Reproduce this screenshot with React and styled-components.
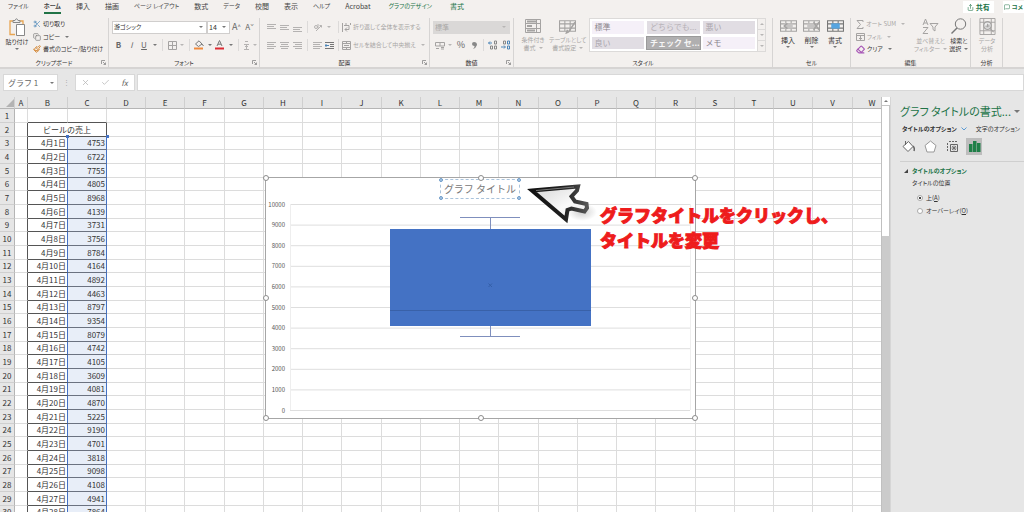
import { useState } from "react"
import styled, { createGlobalStyle } from "styled-components"
import { Check, Copy, Eraser, MessageSquare, Paintbrush, Scissors, Share, X } from "lucide-react"

const TABS = [
    { name: "ファイル" },
    { name: "ホーム", active: true },
    { name: "挿入", kanji: true },
    { name: "描画", kanji: true },
    { name: "ページ レイアウト" },
    { name: "数式", kanji: true },
    { name: "データ" },
    { name: "校閲", kanji: true },
    { name: "表示", kanji: true },
    { name: "ヘルプ" },
    { name: "Acrobat", kanji: true },
    { name: "グラフのデザイン", green: true },
    { name: "書式", kanji: true, green: true },
]

const SALES = [
    4753, 6722, 7755, 4805, 8968, 4139, 3731, 3756, 8784, 4164, 4892, 4463, 8797, 9354,
    8079, 4742, 4105, 3609, 4081, 4870, 5225, 9190, 4701, 3818, 9098, 4108, 4941, 7864,
]

const LETTERS = "ABCDEFGHIJKLMNOPQRSTUVW".split("")
const EMPTY = LETTERS.slice(3)

const STYLES = [
    { name: "標準", bg: "#f5f0f8", color: "#8a858c" },
    { name: "どちらでも...", bg: "#e1dde3", color: "#b5b0b6" },
    { name: "悪い", bg: "#e1dde3", color: "#aaa5ac" },
    { name: "良い", bg: "#e1dde3", color: "#aaa5ac" },
    { name: "チェック セ...", bg: "#b0afb0", color: "#f6f6f6", bold: true },
    { name: "メモ", bg: "#f5f0f8", color: "#8a858c" },
]

const TICKS = [0, 1000, 2000, 3000, 4000, 5000, 6000, 7000, 8000, 9000, 10000]

const yOf = (value) => 233.5 - (value * 206) / 10000

const Lines = ({ align = "left", rows = [0, 3, 6], color = "#b4b2b1" }) => {
    const x = { left: [0, 0], center: [1, 1], right: [2, 0] }[align]
    return (
        <svg width="9" height="9" viewBox="0 0 9 9" stroke={color} aria-hidden="true">
            {rows.map((y, i) => (
                <path key={y} d={i % 2 ? `M${x[0]} ${y + 1.5}H${9 - (align === "left" ? 2 : x[1])}` : `M0 ${y + 1.5}H9`} />
            ))}
        </svg>
    )
}

const GridIcon = ({ width = 16, height = 15, color = "#a5a3a2", fill, mark }) => (
    <svg width={width} height={height} viewBox="0 0 16 15" fill="none" stroke={color} aria-hidden="true">
        <path d="M.5 2.5H15.5V12.5H.5ZM.5 5.5H15.5M.5 9.5H15.5M5.5 2.5V12.5M10.5 2.5V12.5" />
        {fill && <rect x="4" y="5" width="8" height="5" fill={fill} stroke="none" />}
        {mark && <path d={mark} strokeWidth="1.4" />}
    </svg>
)

const Launcher = () => (
    <LauncherButton aria-label="詳細設定">
        <svg width="5" height="5" viewBox="0 0 5 5" fill="none" stroke="#888">
            <path d="M.5 4V.5H4M2 2L4.5 4.5M4.5 2.5V4.5H2.5" strokeWidth=".8" />
        </svg>
    </LauncherButton>
)

const Group = ({ width, label, launcher, children }) => (
    <GroupBox $width={width}>
        <GroupBody>{children}</GroupBody>
        <GroupLabel>{label}</GroupLabel>
        {launcher && <Launcher />}
    </GroupBox>
)

const ClipboardGroup = () => (
    <Group width={109} label="クリップボード" launcher>
        <BigButton $width={28}>
            <svg width="17" height="18" viewBox="0 0 17 18" fill="none" aria-hidden="true">
                <path d="M6 16.5H1V3H4M11 3H14V6" stroke="#e8a552" strokeWidth="1.3" />
                <path d="M4 4.5V2.5H6Q7.5 -1 9 2.5H11V4.5Z" fill="#eee" stroke="#888" />
                <path d="M7.5 6.5H15.5V17.5H7.5Z" fill="#fff" stroke="#888" />
            </svg>
            <span>貼り付け</span>
            <Caret />
        </BigButton>
        <Stack>
            <TextButton><Scissors size={8} color="#4c86b8" strokeWidth={2} />切り取り</TextButton>
            <TextButton><Copy size={8} color="#777" strokeWidth={2} />コピー<Caret $inline /></TextButton>
            <TextButton><Paintbrush size={8} color="#d58a3a" strokeWidth={3} />書式のコピー/貼り付け</TextButton>
        </Stack>
    </Group>
)

const FontGroup = () => (
    <Group width={151} label="フォント" launcher>
        <Rows>
            <Row>
                <SelectWrap $width={95}>
                    <Select aria-label="フォント名"><option>游ゴシック</option></Select>
                    <Caret />
                </SelectWrap>
                <SelectWrap $width={23}>
                    <Select aria-label="フォント サイズ" $large><option>14</option></Select>
                    <Caret />
                </SelectWrap>
                <Tool $width={13} $size={9}>A<sup>^</sup></Tool>
                <Tool $width={13} $size={8}>A<sup>ˇ</sup></Tool>
            </Row>
            <Row>
                <Tool $width={13} $bold>B</Tool>
                <Tool $width={13} $italic>I</Tool>
                <Tool $width={12} $underline>U</Tool>
                <Tool $width={9}><Caret /></Tool>
                <Divider />
                <Tool $width={12}>
                    <svg width="9" height="9" viewBox="0 0 9 9" fill="none" stroke="#a5a3a2" aria-hidden="true">
                        <path d="M.5 .5H8.5V8.5H.5ZM.5 4.5H8.5M4.5 .5V8.5" />
                    </svg>
                </Tool>
                <Tool $width={8}><Caret $dim /></Tool>
                <Divider />
                <Tool $width={12}>
                    <svg width="10" height="10" viewBox="0 0 10 10" fill="none" aria-hidden="true">
                        <path d="M1.5 4L5 .8L8 4L4.5 6.5ZM8 4L9.5 6" stroke="#777" />
                        <path d="M0 8.5H9" stroke="#f08a3c" strokeWidth="2" />
                    </svg>
                </Tool>
                <Tool $width={9}><Caret /></Tool>
                <Tool $width={12}>
                    <svg width="10" height="10" viewBox="0 0 10 10" fill="none" aria-hidden="true">
                        <path d="M2 6L4.5 .5L7 6M3 4.2H6" stroke="#777" />
                        <path d="M0 8.5H9" stroke="#dc2b33" strokeWidth="2" />
                    </svg>
                </Tool>
                <Tool $width={9}><Caret /></Tool>
                <Divider />
                <Tool $width={9}>
                    <svg width="7" height="9" viewBox="0 0 7 9" fill="none" stroke="#b4b2b1" aria-hidden="true">
                        <path d="M2 .5H5M1 3.5H6M2 5.500H5M1 8.500H6M3.500 4V8" />
                    </svg>
                </Tool>
                <Tool $width={8}><Caret $dim /></Tool>
            </Row>
        </Rows>
    </Group>
)

const AlignGroup = () => (
    <Group width={170} label="配置" launcher>
        <Rows $indent>
            <Row>
                <Tool $width={13}><Lines rows={[0, 2, 4]} /></Tool>
                <Tool $width={13}><Lines rows={[1, 3, 5]} /></Tool>
                <Tool $width={13}><Lines rows={[3, 5, 7]} /></Tool>
                <Divider />
                <Tool $width={12}>
                    <svg width="9" height="9" viewBox="0 0 9 9" fill="none" stroke="#b4b2b1" aria-hidden="true">
                        <circle cx="3" cy="4" r="1.5" />
                        <path d="M5 1V5.5M3 8L8.5 2.5M6.5 2.5H8.5V4.5" />
                    </svg>
                </Tool>
                <Tool $width={12}><Caret $dim /></Tool>
                <Divider />
                <TextButton $dim>
                    <svg width="9" height="9" viewBox="0 0 9 9" fill="none" stroke="#a5a3a2" aria-hidden="true">
                        <path d="M.5 0V9M8.5 0V2M2 2.5H7V6.5H3M5 4.5L3 6.5L5 8.5M4 0V2" />
                    </svg>
                    折り返して全体を表示する
                </TextButton>
            </Row>
            <Row>
                <Tool $width={13}><Lines rows={[0, 2, 4, 6]} /></Tool>
                <Tool $width={13}><Lines align="center" rows={[0, 2, 4, 6]} /></Tool>
                <Tool $width={13}><Lines align="right" rows={[0, 2, 4, 6]} /></Tool>
                <Divider />
                <Tool $width={12}><Lines rows={[0, 2, 4, 6]} /></Tool>
                <Tool $width={12}>
                    <svg width="9" height="9" viewBox="0 0 9 9" fill="none" stroke="#777" aria-hidden="true">
                        <path d="M0 1.5H9M5 3.5H9M5 5.5H9M0 7.5H9" />
                        <path d="M4 4.5H0M1.5 3L0 4.5L1.5 6" stroke="#4c86b8" />
                    </svg>
                </Tool>
                <Divider />
                <TextButton $dim>
                    <svg width="9" height="9" viewBox="0 0 9 9" fill="none" stroke="#a5a3a2" aria-hidden="true">
                        <path d="M.5 .5H8.5V8.5H.5ZM.5 2.5H8.5M.5 6.5H8.5M4.5 .5V2.5M4.5 6.5V8.5M2 4.5H7" />
                    </svg>
                    セルを結合して中央揃え
                    <Caret $dim $inline />
                </TextButton>
            </Row>
        </Rows>
    </Group>
)

const DecimalIcon = ({ right }) => (
    <svg width="10" height="10" viewBox="0 0 10 10" fill="none" aria-hidden="true">
        <path d={right ? "M0 7H4M3 5.5L4.5 7L3 8.5" : "M4 3H.5M2 1.5L.5 3L2 4.5"} stroke="#4c86b8" />
        <path d="M6.500 1H8.500V4H6.500ZM6.500 6H8.500V9H6.500Z" stroke={right ? "#4c86b8" : "#888"} />
        <path d={right ? "M2.5 1H4.5V4H2.5Z" : "M2.5 6H4.5V9H2.5Z"} stroke="#888" />
    </svg>
)

const NumberGroup = () => (
    <Group width={84} label="数値" launcher>
        <Rows>
            <Row>
                <SelectWrap $width={77} $disabled>
                    <Select aria-label="表示形式" disabled $large><option>標準</option></Select>
                    <Caret $dim />
                </SelectWrap>
            </Row>
            <Row>
                <Tool $width={13}>
                    <svg width="10" height="9" viewBox="0 0 10 9" fill="none" stroke="#a5a3a2" aria-hidden="true">
                        <path d="M.5 1.5H9.5V5H.5ZM5 2V5M1 7.5H4M6 6.5H9M6 8H9" />
                    </svg>
                </Tool>
                <Tool $width={8}><Caret $dim /></Tool>
                <Tool $width={14} $size={9}>%</Tool>
                <Tool $width={12}>
                    <svg width="5" height="7" viewBox="0 0 5 7" aria-hidden="true">
                        <path d="M2 0Q5 0 5 3Q4 6 1 7Q3 5 2.500 4Q0 4 0 2Q0 0 2 0Z" fill="#888" />
                    </svg>
                </Tool>
                <Divider />
                <Tool $width={12}><DecimalIcon /></Tool>
                <Tool $width={13}><DecimalIcon right /></Tool>
            </Row>
        </Rows>
    </Group>
)

const StyleGroup = () => (
    <Group width={259} label="スタイル">
        <BigButton $width={32} $dim>
            <svg width="16" height="16" viewBox="0 0 16 16" fill="none" stroke="#a5a3a2" aria-hidden="true">
                <path d="M.5 1.5H15.5V14.5H.5ZM.5 5.5H15.5M.5 10.5H15.5M11.5 1.5V14.5" />
                <path d="M2 3.5H11M2 8H7M2 12.5H10" strokeWidth="2" />
            </svg>
            <span>条件付き<br />書式<Caret $dim $inline /></span>
        </BigButton>
        <BigButton $width={34} $dim>
            <GridIcon width={17} height={16} mark="M15 4L9 13L7 14L8 11" />
            <span>テーブルとして<br />書式設定<Caret $dim $inline /></span>
        </BigButton>
        <Gallery>
            <GalleryGrid>
                {STYLES.map((item) => (
                    <StyleTile key={item.name} $bg={item.bg} $color={item.color} $bold={item.bold}>{item.name}</StyleTile>
                ))}
            </GalleryGrid>
            <GalleryScroll>
                <ScrollButton aria-label="上へ"><Caret $dim $up /></ScrollButton>
                <ScrollButton aria-label="下へ"><Caret $dim /></ScrollButton>
                <ScrollButton aria-label="その他"><Caret $dim /></ScrollButton>
            </GalleryScroll>
        </Gallery>
    </Group>
)

const CellGroup = () => (
    <Group width={78} label="セル">
        <BigButton $width={24} $kanji>
            <GridIcon width={17} height={16} fill="#c6c4c3" mark="M7 5L4 7.5L7 10" />
            <span>挿入</span><Caret />
        </BigButton>
        <BigButton $width={23} $kanji>
            <GridIcon width={17} height={16} fill="#c6c4c3" mark="M10 4L15 11M15 4L10 11" />
            <span>削除</span><Caret />
        </BigButton>
        <BigButton $width={24} $kanji>
            <GridIcon width={17} height={16} color="#777" fill="#57a5e0" />
            <span>書式</span><Caret />
        </BigButton>
    </Group>
)

const EditGroup = () => (
    <Group width={120} label="編集">
        <Stack $width={60}>
            <TextButton $dim>
                <svg width="8" height="9" viewBox="0 0 8 9" fill="none" stroke="#a5a3a2" aria-hidden="true">
                    <path d="M7 2V.5H1L4.5 4.5L1 8.5H7V7" />
                </svg>
                オート SUM<Caret $dim $inline />
            </TextButton>
            <TextButton $dim>
                <svg width="9" height="9" viewBox="0 0 9 9" fill="none" stroke="#a5a3a2" aria-hidden="true">
                    <path d="M.5 1.5H8.5V8.5H.5ZM.5 3.5H8.5M4.5 4V7.5M3 6L4.5 7.5L6 6" />
                </svg>
                フィル<Caret $dim $inline />
            </TextButton>
            <TextButton><Eraser size={9} color="#a655b5" strokeWidth={3} />クリア<Caret $inline /></TextButton>
        </Stack>
        <BigButton $width={30} $dim>
            <svg width="17" height="17" viewBox="0 0 17 17" fill="none" stroke="#a5a3a2" aria-hidden="true">
                <path d="M1 7L3.5 1L6 7M2 5H5M1 9.5H6L1 15.5H6M8 5.5H16L13 9V13L11 11.5V9Z" />
            </svg>
            <span>並べ替えと<br />フィルター<Caret $dim $inline /></span>
        </BigButton>
        <BigButton $width={23}>
            <svg width="17" height="17" viewBox="0 0 17 17" fill="none" stroke="#777" aria-hidden="true">
                <circle cx="10.5" cy="6" r="5.200" />
                <path d="M7 10L1.500 15.500" strokeWidth="1.500" />
            </svg>
            <span>検索と<br />選択<Caret $inline /></span>
        </BigButton>
    </Group>
)

const AnalysisGroup = () => (
    <Group width={32} label="分析">
        <BigButton $width={26} $dim>
            <svg width="17" height="17" viewBox="0 0 17 18" fill="none" stroke="#a5a3a2" aria-hidden="true">
                <path d="M.5 .5H16.5V17.5H.5ZM.5 4.5H16.5M.5 13.5H16.5M4.5 .5V17.5M12.5 .5V17.5" />
                <circle cx="8.5" cy="8" r="4" fill="#eee" strokeWidth="1.4" />
                <path d="M11 11L15 15M7 10V8M8.5 10V6M10 10V7" strokeWidth="1.2" />
            </svg>
            <span>データ<br />分析</span>
        </BigButton>
    </Group>
)

const Sheet = () => (
    <Table>
        <colgroup>
            <Col $width={15} />
            <Col $width={13} />
            {LETTERS.slice(1).map((letter, i) => <Col key={letter} $width={i % 4 === 0 ? 40 : 39} />)}
        </colgroup>
        <thead>
            <tr>
                <HeadCell><Corner viewBox="0 0 8 8" aria-hidden="true"><path d="M8 0V8H0Z" fill="#b3b3b3" /></Corner></HeadCell>
                {LETTERS.map((letter) => <HeadCell key={letter} scope="col">{letter}</HeadCell>)}
            </tr>
        </thead>
        <tbody>
            <SheetRow>
                <RowHead scope="row">1</RowHead>
                <Cell />
                <Cell $bottom="#555" />
                <Cell $bottom="#555" />
                {EMPTY.map((letter) => <Cell key={letter} />)}
            </SheetRow>
            <SheetRow>
                <RowHead scope="row">2</RowHead>
                <Cell $right="#555" />
                <Cell colSpan={2} $right="#555" $bottom="#555" $align="center">ビールの売上</Cell>
                {EMPTY.map((letter) => <Cell key={letter} />)}
            </SheetRow>
            {SALES.map((value, i) => (
                <SheetRow key={i}>
                    <RowHead scope="row">{i + 3}</RowHead>
                    <Cell $right="#555" />
                    <Cell $right="#4472c4" $bottom="#555">4月{i + 1}日</Cell>
                    <Cell $right="#4472c4" $bottom="#6b7280" $bg="#e8eef8">{value}</Cell>
                    {EMPTY.map((letter) => <Cell key={letter} />)}
                </SheetRow>
            ))}
        </tbody>
    </Table>
)

const BoxPlot = () => (
    <ChartFrame>
        <Plot viewBox="0 0 431 242" role="img" aria-label="箱ひげ図">
            {TICKS.map((tick) => (
                <g key={tick}>
                    <path d={`M25 ${yOf(tick)}H425`} stroke="#dedede" />
                    <AxisText x="20" y={yOf(tick) + 2} textAnchor="end">{tick}</AxisText>
                </g>
            ))}
            <path d="M25.5 27V233M425.5 27V233" stroke="#eeeeee" />
            <path d="M225.5 40V52M195 40.5H255M225.5 148V159M195 159.5H255" stroke="#7f8fbd" fill="none" />
            <rect x="125" y="52" width="201" height="97" fill="#4472c4" />
            <path d="M125 133.5H326" stroke="#3961a8" />
            <path d="M223.5 106.5L227 110M227 106.5L223.5 110" stroke="#345fa8" />
        </Plot>
        <ChartTitle>
            グラフ タイトル
            <Handle $x="0%" $y="0%" $small />
            <Handle $x="100%" $y="0%" $small />
            <Handle $x="0%" $y="100%" $small />
            <Handle $x="100%" $y="100%" $small />
        </ChartTitle>
        <Handle $x="0%" $y="0%" />
        <Handle $x="50%" $y="0%" />
        <Handle $x="100%" $y="0%" />
        <Handle $x="0%" $y="50%" />
        <Handle $x="100%" $y="50%" />
        <Handle $x="0%" $y="100%" />
        <Handle $x="50%" $y="100%" />
        <Handle $x="100%" $y="100%" />
    </ChartFrame>
)

const Pointer = () => (
    <PointerSvg width="74" height="48" viewBox="0 0 74 48" aria-hidden="true">
        <defs>
            <linearGradient id="pointerFill" x1="0" y1="0" x2="1" y2="1">
                <stop offset="0" stopColor="#d4d4d4" />
                <stop offset="0.6" stopColor="#fafafa" />
                <stop offset="1" stopColor="#e4e4e4" />
            </linearGradient>
            <linearGradient id="pointerEdge" x1="0" y1="0" x2="1" y2="0">
                <stop offset="0" stopColor="#111" />
                <stop offset="0.6" stopColor="#222" />
                <stop offset="1" stopColor="#555" />
            </linearGradient>
            <radialGradient id="pointerShade">
                <stop offset="0" stopColor="#bbb" stopOpacity="0.7" />
                <stop offset="1" stopColor="#bbb" stopOpacity="0" />
            </radialGradient>
        </defs>
        <ellipse cx="58" cy="34" rx="15" ry="9" fill="url(#pointerShade)" />
        <path
            d="M8 12.5L54 8.5L53 12.500L47.500 18.500L51 23.500L62.500 26L63 30L60.500 33.500L47.500 30.500L43.500 32L42 41.500Z"
            fill="url(#pointerFill)" stroke="url(#pointerEdge)" strokeWidth="4" strokeLinejoin="miter"
        />
        <path d="M12 12.500L50 9" stroke="#777" strokeWidth="1" />
    </PointerSvg>
)

const FormatPane = () => {
    const [place, setPlace] = useState("above")

    return (
        <Pane>
            <PaneHeader>
                <PaneTitle>グラフ タイトルの書式...</PaneTitle>
                <Caret $large />
            </PaneHeader>
            <PaneTabs>
                <PaneTab $bold>
                    タイトルのオプション
                    <svg width="6" height="4" viewBox="0 0 6 4" fill="none" stroke="#5b9bd5"><path d="M.5 .5L3 3L5.5 .5" /></svg>
                </PaneTab>
                <PaneTab>文字のオプション</PaneTab>
            </PaneTabs>
            <PaneIcons>
                <PaneIcon aria-label="塗りつぶしと線">
                    <svg width="13" height="13" viewBox="0 0 13 13" fill="#fff" stroke="#666">
                        <path d="M1 6.5L6.5 1.5L11 6.5L6 11.5ZM3.5 1V5" />
                        <path d="M11 6Q13 8 12 11" fill="none" strokeWidth="1.5" />
                    </svg>
                </PaneIcon>
                <PaneIcon aria-label="効果">
                    <svg width="13" height="13" viewBox="0 0 13 13" fill="#fff" stroke="#999">
                        <path d="M6.5 1L12 5.500L10 12H3L1 5.500Z" />
                    </svg>
                </PaneIcon>
                <PaneIcon aria-label="サイズとプロパティ">
                    <svg width="13" height="13" viewBox="0 0 13 13" fill="none" stroke="#666">
                        <path d="M3 1.5H12M1.5 3V12" strokeDasharray="2 1" />
                        <path d="M4.500 4.500H11.500V11.500H4.500Z" />
                        <path d="M8 5.500V10.500M5.500 8H10.500M6 6L10 10M10 6L6 10" strokeWidth=".8" />
                    </svg>
                </PaneIcon>
                <PaneIcon aria-label="タイトルのオプション" $active>
                    <svg width="13" height="13" viewBox="0 0 13 13" fill="#1f7f48">
                        <path d="M1 4H4.5V12H1ZM5 1H8.5V12H5ZM9 3H12.5V12H9Z" />
                    </svg>
                </PaneIcon>
            </PaneIcons>
            <Section>
                <SectionTitle>
                    <svg width="4" height="4" viewBox="0 0 4 4"><path d="M4 0V4H0Z" fill="#444" /></svg>
                    タイトルのオプション
                </SectionTitle>
                <PlaceSet>
                    <legend>タイトルの位置</legend>
                    <RadioLabel>
                        <Radio type="radio" name="place" checked={place === "above"} onChange={() => setPlace("above")} />
                        <span>上(<u>A</u>)</span>
                    </RadioLabel>
                    <RadioLabel>
                        <Radio type="radio" name="place" checked={place === "overlay"} onChange={() => setPlace("overlay")} />
                        <span>オーバーレイ(<u>O</u>)</span>
                    </RadioLabel>
                </PlaceSet>
            </Section>
        </Pane>
    )
}

const App = () => (
    <Page>
        <GlobalStyle />
        <TabBar>
            <TabList>
                {TABS.map((tab) => (
                    <Tab key={tab.name} $active={tab.active} $green={tab.green} $kanji={tab.kanji}>{tab.name}</Tab>
                ))}
            </TabList>
            <ShareButton $large><Share size={7} />共有</ShareButton>
            <ShareButton><MessageSquare size={6} />コメ</ShareButton>
        </TabBar>
        <Ribbon>
            <ClipboardGroup />
            <FontGroup />
            <AlignGroup />
            <NumberGroup />
            <StyleGroup />
            <CellGroup />
            <EditGroup />
            <AnalysisGroup />
        </Ribbon>
        <FormulaBar>
            <NameBox>
                <NameInput aria-label="名前ボックス" defaultValue="グラフ 1" />
                <Caret />
            </NameBox>
            <Grip>⋮</Grip>
            <FormulaTools>
                <Tool $width={19} aria-label="キャンセル"><X size={9} color="#b5b5b5" /></Tool>
                <Tool $width={20} aria-label="入力"><Check size={9} color="#b5b5b5" /></Tool>
                <Tool $width={19} $italic>fx</Tool>
            </FormulaTools>
            <FormulaInput aria-label="数式バー" />
        </FormulaBar>
        <Workspace>
            <Canvas>
                <Sheet />
                <RangeMark $left={66} />
                <RangeMark $left={106} />
                <BoxPlot />
                <Pointer />
                <Note>グラフタイトルをクリックし、<br />タイトルを変更</Note>
            </Canvas>
            <ScrollBar>
                <ScrollArrow aria-label="上にスクロール"><Caret $up /></ScrollArrow>
                <Thumb />
            </ScrollBar>
            <FormatPane />
        </Workspace>
    </Page>
)

export default App

const GlobalStyle = createGlobalStyle`
    * {
        box-sizing: border-box;
    }
    body {
        margin: 0;
        overflow: hidden;
    }
    body, button, input, select {
        font-family: "Noto Sans CJK JP", "Noto Sans", sans-serif;
        font-size: 6px;
        line-height: 8px;
        color: #333;
    }
    button, input, select {
        margin: 0;
        padding: 0;
        border: none;
        background: none;
    }
    svg {
        flex: none;
    }
`

const Page = styled.div`
    height: 100vh;
    display: flex;
    flex-direction: column;
    background: #e6e6e6;
    overflow: hidden;
`

const Caret = styled.span`
    flex: none;
    display: inline-block;
    width: 0;
    height: 0;
    border: ${({ $large }) => ($large ? 3 : 2)}px solid transparent;
    border-bottom-width: 0;
    border-top-color: ${({ $dim }) => ($dim ? "#b8b6b5" : "#777")};
    transform: ${({ $up }) => ($up ? "rotate(180deg)" : "none")};
    margin-left: ${({ $inline }) => ($inline ? 3 : 0)}px;
    vertical-align: middle;
`

// tabs
const TabBar = styled.nav`
    flex: none;
    height: 14px;
    display: flex;
    gap: 9px;
    background: #f3f0ee;
`

const TabList = styled.div`
    flex: 1;
    display: flex;
    gap: 15px;
    padding-left: 8px;
`

const Tab = styled.button`
    height: 14px;
    white-space: nowrap;
    font-feature-settings: "palt";
    font-size: ${({ $kanji }) => ($kanji ? 7 : 6)}px;
    font-weight: ${({ $active }) => ($active ? 700 : 400)};
    color: ${({ $green }) => ($green ? "#217346" : "#444")};
    border-bottom: 2px solid ${({ $active }) => ($active ? "#217346" : "transparent")};
    margin-left: ${({ $green }) => ($green ? 3 : 0)}px;
`

const ShareButton = styled.button`
    display: flex;
    align-items: center;
    gap: 2px;
    height: 12px;
    margin-top: 1px;
    padding: 0 ${({ $large }) => ($large ? 4 : 1)}px;
    background: #fff;
    color: #217346;
    font-size: ${({ $large }) => ($large ? 7 : 6)}px;
    font-weight: 700;
    font-feature-settings: "palt";
    white-space: nowrap;
`

// ribbon
const Ribbon = styled.div`
    flex: none;
    height: 55px;
    display: flex;
    padding-top: 4px;
    background: #f3f0ee;
    border-bottom: 2px solid #d6d4d3;
`

const GroupBox = styled.section`
    position: relative;
    flex: 0 0 ${({ $width }) => $width}px;
    min-width: 0;
    display: flex;
    flex-direction: column;
    padding: 0 3px;
    border-right: 1px solid #d6d4d3;
    font-feature-settings: "palt";
`

const GroupBody = styled.div`
    flex: 1;
    display: flex;
`

const GroupLabel = styled.div`
    height: 9px;
    line-height: 9px;
    text-align: center;
    white-space: nowrap;
`

const LauncherButton = styled.button`
    position: absolute;
    right: 2px;
    bottom: 2px;
    display: flex;
`

const Stack = styled.div`
    flex: 0 0 ${({ $width }) => ($width ? `${$width}px` : "auto")};
    display: flex;
    flex-direction: column;
    justify-content: space-between;
    padding: 0 0 3px 2px;
`

const Rows = styled.div`
    flex: 1;
    display: flex;
    flex-direction: column;
    gap: 4px;
    padding: 2px 0 0 ${({ $indent }) => ($indent ? 2 : 0)}px;
`

const Row = styled.div`
    display: flex;
    align-items: center;
    height: 14px;
`

const TextButton = styled.button`
    display: flex;
    align-items: center;
    gap: 2px;
    height: 12px;
    white-space: nowrap;
    font-feature-settings: "palt";
    color: ${({ $dim }) => ($dim ? "#a8a6a5" : "#333")};
`

const BigButton = styled.button`
    flex: 0 0 ${({ $width }) => $width}px;
    display: flex;
    flex-direction: column;
    align-items: center;
    justify-content: flex-start;
    gap: 2px;
    white-space: nowrap;
    font-size: ${({ $kanji }) => ($kanji ? 7 : 6)}px;
    font-feature-settings: "palt";
    color: ${({ $dim }) => ($dim ? "#a8a6a5" : "#333")};
`

const Tool = styled.button`
    flex: 0 0 ${({ $width }) => $width}px;
    display: flex;
    align-items: center;
    justify-content: center;
    font-size: ${({ $size = 8 }) => $size}px;
    font-weight: ${({ $bold }) => ($bold ? 700 : 400)};
    font-style: ${({ $italic }) => ($italic ? "italic" : "normal")};
    text-decoration: ${({ $underline }) => ($underline ? "underline" : "none")};
    color: #666;

    sup {
        font-size: 6px;
    }
`

const Divider = styled.span`
    flex: none;
    width: 1px;
    height: 12px;
    margin: 0 3px;
    background: #dcdad9;
`

const SelectWrap = styled.span`
    flex: 0 0 ${({ $width }) => $width}px;
    height: 13px;
    display: flex;
    align-items: center;
    padding-right: 3px;
    border: 1px solid ${({ $disabled }) => ($disabled ? "#dad8d7" : "#d0cecd")};
    background: ${({ $disabled }) => ($disabled ? "#dad8d7" : "#fff")};
`

const Select = styled.select`
    flex: 1;
    min-width: 0;
    appearance: none;
    padding-left: 1px;
    font-size: ${({ $large }) => ($large ? 7 : 6)}px;
    font-feature-settings: "palt";
    opacity: 1;

    &:disabled {
        color: #aaa8a7;
    }
`

const Gallery = styled.div`
    flex: 1;
    display: flex;
    margin: 0 3px 0 2px;
    height: 34px;
    background: #fff;
    border: 1px solid #dcdad9;
`

const GalleryGrid = styled.div`
    flex: 1;
    display: grid;
    grid-template-columns: repeat(3, 1fr);
    gap: 3px;
    padding: 2px;
`

const StyleTile = styled.button`
    overflow: hidden;
    text-align: left;
    padding-left: 3px;
    font-size: 8px;
    white-space: nowrap;
    background: ${({ $bg }) => $bg};
    color: ${({ $color }) => $color};
    font-weight: ${({ $bold }) => ($bold ? 700 : 400)};
    outline: ${({ $bold }) => ($bold ? "1px solid #9a9a9a" : "none")};
`

const GalleryScroll = styled.div`
    display: flex;
    flex-direction: column;
    width: 8px;
    border-left: 1px solid #dcdad9;
    background: #f3f0ee;
`

const ScrollButton = styled.button`
    flex: 1;
    display: flex;
    align-items: center;
    justify-content: center;

    & + & {
        border-top: 1px solid #dcdad9;
    }
`

// formula bar
const FormulaBar = styled.div`
    flex: none;
    height: 28px;
    display: flex;
    padding: 5px 0 6px 3px;
`

const NameBox = styled.div`
    width: 55px;
    display: flex;
    align-items: center;
    padding: 0 3px 0 4px;
    background: #fff;
    border: 1px solid #d8d8d8;
`

const NameInput = styled.input`
    flex: 1;
    min-width: 0;
    font-size: 8px;
    color: #666;
`

const Grip = styled.span`
    width: 17px;
    text-align: center;
    font-size: 7px;
    line-height: 16px;
    color: #aaa;
`

const FormulaTools = styled.div`
    display: flex;
    background: #fff;
    border: 1px solid #d8d8d8;
    margin-right: 2px;
`

const FormulaInput = styled.input`
    flex: 1;
    background: #fff;
    border: 1px solid #d8d8d8;
`

// sheet
const Workspace = styled.div`
    flex: 1;
    min-height: 0;
    display: flex;
`

const Canvas = styled.div`
    position: relative;
    flex: 1;
    min-width: 0;
    overflow: hidden;
    background: #fff;
`

const Table = styled.table`
    table-layout: fixed;
    width: 892px;
    border-collapse: separate;
    border-spacing: 0;
    font-size: 8px;
`

const Col = styled.col`
    width: ${({ $width }) => $width}px;
`

const HeadCell = styled.th`
    height: 12px;
    padding: 0;
    line-height: 11px;
    font-weight: 400;
    background: #e6e6e6;
    border-right: 1px solid #cfcfcf;
    border-bottom: 1px solid #b5b5b5;
`

const Corner = styled.svg`
    display: block;
    width: 8px;
    height: 8px;
    margin-left: auto;
`

const SheetRow = styled.tr`
    height: 14px;

    &:nth-child(3n) {
        height: 13px;
    }
`

const RowHead = styled.th`
    padding: 0;
    line-height: 12px;
    font-weight: 400;
    background: #e6e6e6;
    border-right: 1px solid #b5b5b5;
    border-bottom: 1px solid #cfcfcf;
`

const Cell = styled.td`
    padding: 0 1px;
    line-height: 12px;
    white-space: nowrap;
    text-align: ${({ $align = "right" }) => $align};
    background: ${({ $bg = "#fff" }) => $bg};
    border-right: 1px solid ${({ $right = "#dcdcdc" }) => $right};
    border-bottom: 1px solid ${({ $bottom = "#dcdcdc" }) => $bottom};
`

// corner grips of the selected data range
const RangeMark = styled.span`
    position: absolute;
    left: ${({ $left }) => $left}px;
    top: 38px;
    width: 3px;
    height: 3px;
    background: #4472c4;
`

// chart lies over the cells
const ChartFrame = styled.div`
    position: absolute;
    left: 265px;
    top: 80px;
    width: 431px;
    height: 242px;
    background: #fff;
    border: 1px solid #a6a6a6;
`

const Plot = styled.svg`
    display: block;
    width: 431px;
    height: 242px;
    margin: -1px;
`

const AxisText = styled.text`
    font-size: 6px;
    fill: #555;
`

const ChartTitle = styled.div`
    position: absolute;
    left: 174px;
    top: 1px;
    width: 80px;
    height: 20px;
    border: 1px dashed #a9c3dc;
    font-size: 10px;
    line-height: 18px;
    text-align: center;
    white-space: nowrap;
    color: #777;
`

const Handle = styled.span`
    position: absolute;
    left: ${({ $x }) => $x};
    top: ${({ $y }) => $y};
    width: ${({ $small }) => ($small ? 4 : 6)}px;
    height: ${({ $small }) => ($small ? 4 : 6)}px;
    margin: ${({ $small }) => ($small ? -2 : -3)}px;
    border: 1px solid ${({ $small }) => ($small ? "#6f9cc8" : "#8c8c8c")};
    border-radius: 50%;
    background: ${({ $small }) => ($small ? "#a9c9e8" : "#fff")};
`

const PointerSvg = styled.svg`
    position: absolute;
    left: 524px;
    top: 81px;
`

const Note = styled.p`
    position: absolute;
    left: 600px;
    top: 105px;
    margin: 0;
    font-size: 17px;
    line-height: 25px;
    font-weight: 900;
    white-space: nowrap;
    color: #ee1c1c;
    -webkit-text-stroke: 1px #ee1c1c;
`

const ScrollBar = styled.div`
    flex: none;
    width: 9px;
    display: flex;
    flex-direction: column;
    background: #cbcbcb;
    border-left: 1px solid #c0c0c0;
`

const ScrollArrow = styled.button`
    height: 9px;
    display: flex;
    align-items: center;
    justify-content: center;
    background: #fff;
    border-bottom: 1px solid #c6c6c6;
`

const Thumb = styled.div`
    height: 130px;
    background: #fff;
    border-right: 1px solid #c6c6c6;
`

// format pane
const Pane = styled.aside`
    flex: 0 0 134px;
    min-width: 0;
    padding: 5px 0 0 9px;
    border-left: 1px solid #d6d6d6;
    font-feature-settings: "palt";
    white-space: nowrap;
`

const PaneHeader = styled.div`
    display: flex;
    align-items: center;
    gap: 3px;
    height: 18px;
`

const PaneTitle = styled.h2`
    margin: 0;
    font-size: 11px;
    line-height: 18px;
    font-weight: 400;
    color: #217346;
`

const PaneTabs = styled.div`
    display: flex;
    gap: 9px;
    padding: 3px 0 0 2px;
    height: 14px;
`

const PaneTab = styled.button`
    display: flex;
    align-items: center;
    gap: 4px;
    font-feature-settings: "palt";
    white-space: nowrap;
    font-weight: ${({ $bold }) => ($bold ? 700 : 400)};
`

const PaneIcons = styled.div`
    display: flex;
    gap: 6px;
    margin-top: 4px;
    padding-bottom: 6px;
    border-bottom: 1px solid #cfcfcf;
`

const PaneIcon = styled.button`
    width: 16px;
    height: 17px;
    display: flex;
    align-items: center;
    justify-content: center;
    background: ${({ $active }) => ($active ? "#bdbdbd" : "none")};
`

const Section = styled.section`
    padding: 3px 0 0 4px;
`

const SectionTitle = styled.h3`
    display: flex;
    align-items: center;
    gap: 4px;
    margin: 0;
    font-size: 6px;
    line-height: 12px;
    color: #217346;
`

const PlaceSet = styled.fieldset`
    margin: 0;
    padding: 0 0 0 8px;
    border: none;

    legend {
        padding: 0;
        line-height: 12px;
    }
`

const RadioLabel = styled.label`
    display: flex;
    align-items: center;
    gap: 3px;
    height: 13px;
    padding-left: 5px;

    legend + & {
        margin-top: 2px;
    }
`

const Radio = styled.input`
    appearance: none;
    width: 6px;
    height: 6px;
    border: 1px solid #aaa;
    border-radius: 50%;
    background: #fff;

    &:checked {
        background: radial-gradient(#444 30%, #fff 50%);
    }
`
